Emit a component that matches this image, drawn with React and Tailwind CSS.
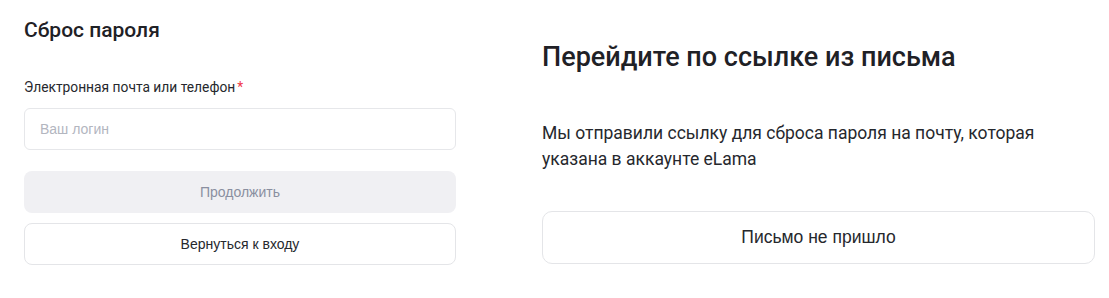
import React, { useState } from "react";

const sans = "font-['Roboto','Liberation_Sans',sans-serif]";
const arial = "font-['Liberation_Sans','Roboto',sans-serif]";

const ResetForm = () => {
    const [login, setLogin] = useState("");

    return (
        <div className="w-[432px] shrink-0 pt-4">
            <h2 className={`${sans} text-[21px] leading-[28px] font-medium text-[#1f2126]`}>Сброс пароля</h2>

            <label className={`${sans} block mt-[33px] text-[13.8px] leading-5 text-[#26282d]`}>
                Электронная почта или телефон<span className="ml-[2px] text-[#f0384a]">*</span>
            </label>
            <input
                type="text"
                value={login}
                onChange={(e) => setLogin(e.target.value)}
                placeholder="Ваш логин"
                className={`${arial} mt-[11px] block w-full h-[42px] px-[15px] text-[14px] text-[#26282d] placeholder:text-[#b3b6bf] bg-white border border-[#e6e7ea] rounded-[6px] outline-none`}
            />

            <button
                disabled
                className={`${arial} mt-[21px] block w-full h-[42px] text-[14px] text-[#8a8fa0] bg-[#f0f0f3] rounded-[8px]`}
            >
                Продолжить
            </button>
            <button className={`${arial} mt-[10px] block w-full h-[42px] text-[14px] text-[#26282d] bg-white border border-[#e4e5e8] rounded-[8px]`}>
                Вернуться к входу
            </button>
        </div>
    );
};

const CheckMail = () => (
    <div className="flex-1 pt-[41px]">
        <h1 className={`${sans} text-[27px] leading-8 font-medium text-[#1f2126]`}>Перейдите по ссылке из письма</h1>
        <p className={`${sans} mt-[47px] text-[17.5px] leading-[26px] text-[#26282d]`}>
            Мы отправили ссылку для сброса пароля на почту, которая
            <br />
            указана в аккаунте eLama
        </p>
        <button className={`${arial} mt-[39px] block w-full h-[53px] text-[17.5px] text-[#26282d] bg-white border border-[#e4e5e8] rounded-[10px]`}>
            Письмо не пришло
        </button>
    </div>
);

export default function App() {
    return (
        <div className="flex min-h-screen bg-white pl-6 pr-[14px] gap-[86px]">
            <ResetForm />
            <CheckMail />
        </div>
    );
}
